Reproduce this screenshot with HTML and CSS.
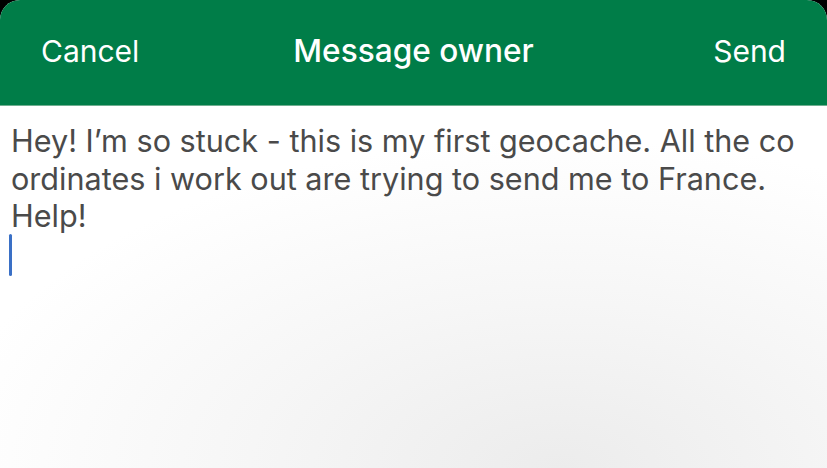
FILE: index.html
```html
<!DOCTYPE html>
<html lang="en">
<head>
<meta charset="utf-8">
<title>Message owner</title>
<link rel="stylesheet" href="styles.css">
</head>
<body>
<div class="sheet">
  <header class="navbar">
    <span class="nav-btn nav-left">Cancel</span>
    <h1 class="nav-title">Message owner</h1>
    <span class="nav-btn nav-right">Send</span>
  </header>
  <main class="composer">
    <p class="message">Hey! I’m so stuck - this is my first geocache. All the co<br>ordinates i work out are trying to send me to France.<br>Help!</p>
    <div class="caret"></div>
  </main>
</div>
</body>
</html>
```

FILE: styles.css
```css
html, body {
  margin: 0;
  padding: 0;
  background: #000;
  height: 100%;
}
.sheet {
  height: 468px;
  display: flex;
  flex-direction: column;
  border-radius: 20px 20px 0 0;
  overflow: hidden;
  background: radial-gradient(ellipse 620px 330px at 560px 468px, #ececec 0%, #f6f6f6 50%, #ffffff 100%);
  font-family: Inter, "Noto Sans", sans-serif;
}
.navbar {
  height: 106px;
  flex: none;
  background: #007d48;
  border-bottom: 1px solid #6fae90;
  display: grid;
  grid-template-columns: 1fr auto 1fr;
  align-items: center;
  padding: 0 41px 4px 41px;
  box-sizing: border-box;
  color: #fff;
}
.nav-btn {
  font-size: 30px;
  font-weight: 400;
}
.nav-left { justify-self: start; }
.nav-right { justify-self: end; }
.nav-title {
  margin: 0;
  font-size: 31.6px;
  font-weight: 500;
}
.composer {
  flex: 1;
  padding: 16px 0 0 11px;
}
.message {
  margin: 0;
  font-size: 30.6px;
  line-height: 37.5px;
  color: #4a4a4a;
  white-space: nowrap;
}
.caret {
  width: 3px;
  height: 42px;
  margin: -1px 0 0 -2px;
  background: #3a70c6;
  border-radius: 1.5px;
}
```
